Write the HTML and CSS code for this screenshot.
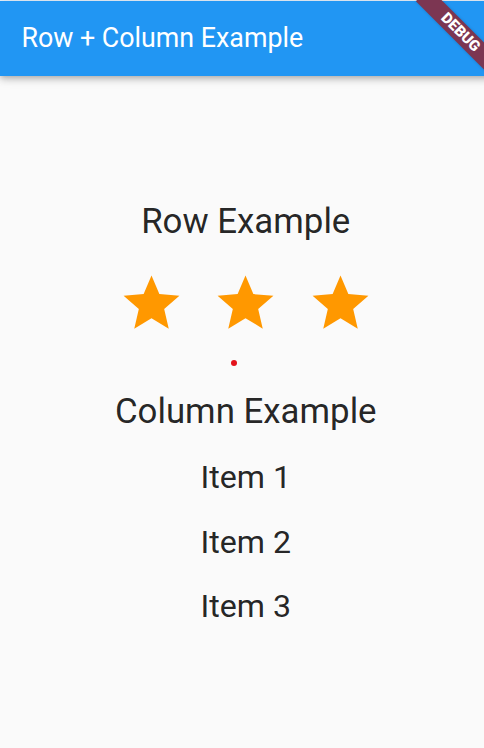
FILE: index.html
```
<!DOCTYPE html>
<html>
<head>
<meta charset="utf-8">
<link rel="stylesheet" href="styles.css">
</head>
<body>
<div class="screen">
  <div class="topline"></div>
  <header class="appbar">
    <h1 class="title">Row + Column Example</h1>
  </header>
  <main class="content">
    <div class="heading">Row Example</div>
    <div class="stars">
      <svg class="star" viewBox="0 0 24 24"><path d="M12 17.27L18.18 21l-1.64-7.03L22 9.24l-7.19-.61L12 2 9.19 8.63 2 9.24l5.46 4.73L5.82 21z"/></svg>
      <svg class="star" viewBox="0 0 24 24"><path d="M12 17.27L18.18 21l-1.64-7.03L22 9.24l-7.19-.61L12 2 9.19 8.63 2 9.24l5.46 4.73L5.82 21z"/></svg>
      <svg class="star" viewBox="0 0 24 24"><path d="M12 17.27L18.18 21l-1.64-7.03L22 9.24l-7.19-.61L12 2 9.19 8.63 2 9.24l5.46 4.73L5.82 21z"/></svg>
    </div>
    <div class="dot"></div>
    <div class="heading col-heading">Column Example</div>
    <div class="item">Item 1</div>
    <div class="item">Item 2</div>
    <div class="item">Item 3</div>
  </main>
  <div class="banner"><span>DEBUG</span></div>
</div>
</body>
</html>
```
FILE: styles.css
```
html, body {
  margin: 0;
  padding: 0;
  width: 484px;
  height: 748px;
  overflow: hidden;
  background: #fafafa;
}
.screen {
  position: relative;
  width: 491.5px;
  height: 760px;
  overflow: hidden;
  font-family: Roboto, "Noto Sans", sans-serif;
  background: #fafafa;
}
.topline {
  height: 1px;
  background: #e6f1fc;
}
.appbar {
  height: 74.5px;
  background: #2196f3;
  display: flex;
  align-items: center;
  padding: 0 21.4px;
  box-shadow: 0 2.7px 5.4px -1.3px rgba(0,0,0,0.2), 0 5.4px 6.7px 0 rgba(0,0,0,0.14), 0 1.3px 13.4px 0 rgba(0,0,0,0.12);
  position: relative;
  z-index: 1;
}
.title {
  margin: 0;
  font-size: 26.8px;
  font-weight: 400;
  line-height: 1.172;
  color: #fff;
}
.content {
  display: flex;
  flex-direction: column;
  align-items: center;
  padding-top: 126.5px;
  color: rgba(0,0,0,0.87);
}
.heading {
  font-size: 34.84px;
  line-height: 40.8px;
  height: 40.8px;
  white-space: nowrap;
}
.item {
  font-size: 32.16px;
  line-height: 37.7px;
  height: 37.7px;
  white-space: nowrap;
  margin-top: 26.6px;
}
.stars {
  display: flex;
  gap: 27.5px;
  margin-top: 27.6px;
}
.star {
  width: 67px;
  height: 67px;
  display: block;
  fill: #ff9800;
}
.dot {
  width: 6px;
  height: 6px;
  border-radius: 50%;
  background: #e3121b;
  margin-top: 22.3px;
  margin-right: 23.5px;
}
.col-heading {
  margin-top: 26.3px;
}
.banner {
  position: absolute;
  left: 407.4px;
  top: 22.6px;
  width: 107.2px;
  height: 18.7px;
  transform: rotate(45deg);
  background: #7c3652;
  box-shadow: 0 0 3px rgba(0,0,0,0.2);
  display: flex;
  align-items: center;
  justify-content: center;
  z-index: 2;
}
.banner span {
  color: #fff;
  font-family: Roboto, sans-serif;
  font-weight: 900;
  font-size: 15px;
  line-height: 1;
}
```
